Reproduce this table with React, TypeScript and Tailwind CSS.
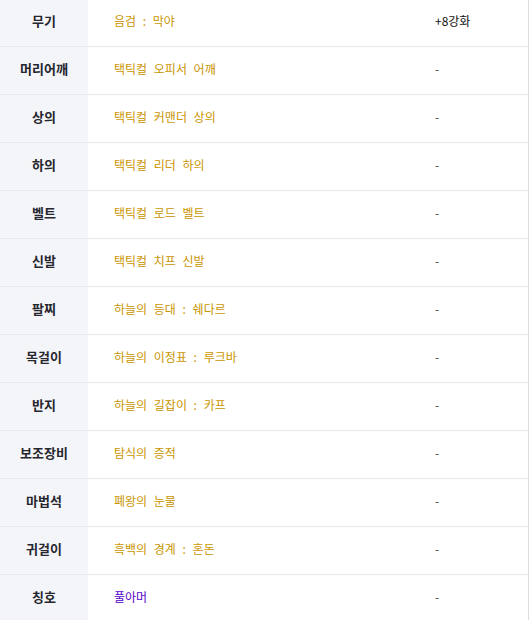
import React from 'react';

type Row = {
  slot: string;
  item: string;
  extra: string;
  purple?: boolean;
};

const rows: Row[] = [
  { slot: '무기', item: '음검 : 막야', extra: '+8강화' },
  { slot: '머리어깨', item: '택틱컬 오피서 어깨', extra: '-' },
  { slot: '상의', item: '택틱컬 커맨더 상의', extra: '-' },
  { slot: '하의', item: '택틱컬 리더 하의', extra: '-' },
  { slot: '벨트', item: '택틱컬 로드 벨트', extra: '-' },
  { slot: '신발', item: '택틱컬 치프 신발', extra: '-' },
  { slot: '팔찌', item: '하늘의 등대 : 쉐다르', extra: '-' },
  { slot: '목걸이', item: '하늘의 이정표 : 루크바', extra: '-' },
  { slot: '반지', item: '하늘의 길잡이 : 카프', extra: '-' },
  { slot: '보조장비', item: '탐식의 증적', extra: '-' },
  { slot: '마법석', item: '폐왕의 눈물', extra: '-' },
  { slot: '귀걸이', item: '흑백의 경계 : 혼돈', extra: '-' },
  { slot: '칭호', item: '풀아머', extra: '-', purple: true },
];

const App: React.FC = () => {
  return (
    <div
      className="w-[530px] h-[620px] overflow-hidden bg-white text-[12px] [word-spacing:4px]"
      style={{ fontFamily: '"Noto Sans CJK KR", "Noto Sans", sans-serif' }}
    >
      <div className="-mt-px w-[529px] border-r border-[#dddddd]">
        {rows.map((row) => (
          <div key={row.slot} className="flex h-[48px] border-b border-[#e8e8ea]">
            <div className="w-[88px] shrink-0 bg-[#f4f5f9] flex items-center justify-center pb-[3px] text-[13px] font-bold text-[#26262e]">
              {row.slot}
            </div>
            <div
              className={
                row.purple
                  ? 'w-[321px] shrink-0 flex items-center pl-[26px] pb-[3px] text-[#5200c8]'
                  : 'w-[321px] shrink-0 flex items-center pl-[26px] pb-[3px] text-[#c99500]'
              }
            >
              {row.item}
            </div>
            <div
              className={
                row.extra === '-'
                  ? 'flex-1 flex items-center pl-[26px] pb-[3px] text-[#444455]'
                  : 'flex-1 flex items-center pl-[26px] pb-[3px] text-[#111111]'
              }
            >
              {row.extra}
            </div>
          </div>
        ))}
      </div>
    </div>
  );
};

export default App;
